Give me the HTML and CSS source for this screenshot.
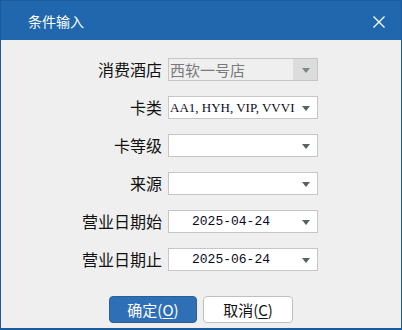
FILE: index.html
```html
<!DOCTYPE html>
<html lang="zh">
  <head>
    <meta charset="utf-8" />
    <title>条件输入</title>
    <link rel="stylesheet" href="styles.css">
  </head>
  <body>
    <div class="dialog">
      <div class="title_bar">
        <span class="title">条件输入</span>
        <svg class="close" width="12" height="12" viewBox="0 0 12 12">
          <path d="M0.5 0.5 L11.5 11.5 M11.5 0.5 L0.5 11.5" stroke="#fff" stroke-width="1.3" fill="none"/>
        </svg>
      </div>
      <div class="form">
        <label>消费酒店</label>
        <div class="combo disabled">
          <span class="value cjk">西软一号店</span>
          <span class="drop"><i></i></span>
        </div>

        <label>卡类</label>
        <div class="combo">
          <span class="value serif">AA1, HYH, VIP, VVVI</span>
          <span class="drop"><i></i></span>
        </div>

        <label>卡等级</label>
        <div class="combo">
          <span class="value"></span>
          <span class="drop"><i></i></span>
        </div>

        <label>来源</label>
        <div class="combo">
          <span class="value"></span>
          <span class="drop"><i></i></span>
        </div>

        <label>营业日期始</label>
        <div class="combo">
          <span class="value date">2025-04-24</span>
          <span class="drop"><i></i></span>
        </div>

        <label>营业日期止</label>
        <div class="combo">
          <span class="value date">2025-06-24</span>
          <span class="drop"><i></i></span>
        </div>
      </div>
      <div class="buttons">
        <button class="ok">确定(<u>O</u>)</button>
        <button class="cancel">取消(<u>C</u>)</button>
      </div>
    </div>
  </body>
</html>
```

FILE: styles.css
```css
* {
  margin: 0;
  padding: 0;
  box-sizing: border-box;
}
body {
  background: #efefef;
  font-family: "Noto Sans CJK SC", "Noto Sans", sans-serif;
}
.dialog {
  width: 402px;
  height: 330px;
  border: 1px solid #1c5b9b;
  border-bottom-width: 2px;
  background: #efefef;
  display: flex;
  flex-direction: column;
}
.title_bar {
  height: 39px;
  background: #2067ae;
  color: #fff;
  display: flex;
  align-items: center;
  justify-content: space-between;
  padding: 0 16px 0 27px;
}
.title {
  font-size: 14px;
  line-height: 1;
}
.close {
  display: block;
  margin-top: 2px;
}
.form {
  display: grid;
  grid-template-columns: 161px 150px;
  column-gap: 6px;
  row-gap: 15px;
  margin-top: 18px;
  align-items: center;
}
.form label {
  text-align: right;
  font-size: 16px;
  line-height: 23px;
  color: #111;
}
.combo {
  height: 23px;
  display: flex;
  background: #fff;
  border: 1px solid #c6c6c6;
  overflow: hidden;
}
.combo .value {
  flex: 1;
  min-width: 0;
  white-space: nowrap;
  overflow: hidden;
  line-height: 21px;
  color: #0a0a1e;
}
.combo .drop {
  width: 22px;
  display: flex;
  align-items: center;
  padding-left: 7px;
}
.combo .drop i {
  width: 0;
  height: 0;
  border-left: 4px solid transparent;
  border-right: 4px solid transparent;
  border-top: 5px solid #5a6161;
  margin-top: 1px;
}
.cjk {
  font-size: 15px;
  padding-left: 1px;
}
.serif {
  font-family: "Liberation Serif", serif;
  font-size: 13px;
  padding-left: 1px;
}
.date {
  font-family: "Liberation Mono", monospace;
  font-size: 13px;
  text-align: center;
  padding-right: 2px;
}
.disabled {
  background: #efefef;
}
.disabled .value {
  color: #7a7a7a;
}
.disabled .drop {
  width: 24px;
  padding-left: 9px;
  background: #dcdcdc;
}
.disabled .drop i {
  border-top-color: #7e8585;
}
.buttons {
  display: flex;
  gap: 6px;
  padding-left: 108px;
  margin-top: 25px;
}
.buttons button {
  height: 27px;
  border-radius: 4px;
  font-family: "Noto Sans CJK SC", sans-serif;
  font-size: 15px;
  line-height: 1;
}
.buttons u {
  text-underline-offset: 2px;
}
.ok {
  width: 88px;
  background: #2f6fb5;
  border: 1px solid #2a5f99;
  color: #fff;
}
.cancel {
  width: 90px;
  background: #fff;
  border: 1px solid #bfbfbf;
  color: #111;
}
```
